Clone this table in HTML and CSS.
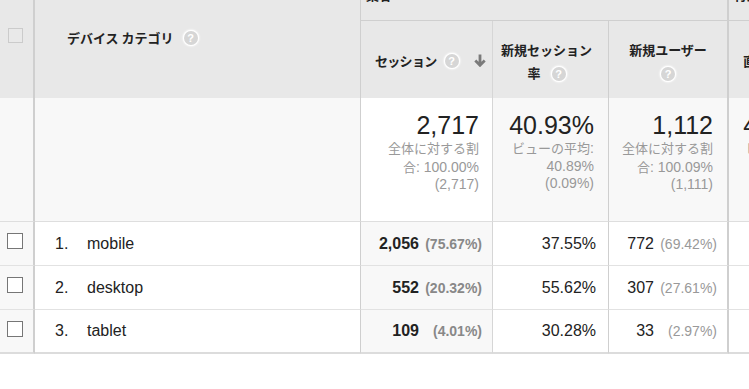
FILE: index.html
```html
<!DOCTYPE html>
<html lang="ja">
<head>
<meta charset="utf-8">
<title>デバイス カテゴリ</title>
<link rel="stylesheet" href="styles.css">
</head>
<body>
<div class="report">
  <div class="cell hd col0 hd-check"><span class="cb cb-head"></span></div>
  <div class="cell hd col1 hd-dim"><span class="hd-label">デバイス カテゴリ</span><span class="help">?</span></div>
  <div class="cell hd grp grp-acq">集客</div>
  <div class="cell hd grp grp-beh">行動</div>

  <div class="cell hd col2 metric m-sess"><span class="hd-label">セッション</span><span class="help">?</span><svg class="sort" width="12" height="13" viewBox="0 0 12 13"><path d="M6 0.5V11.2M1.3 6.6L6 11.3L10.7 6.6" fill="none" stroke="#7a7a7a" stroke-width="2.8"/></svg></div>
  <div class="cell hd col3 metric m-rate"><div class="hd-lines"><span class="hd-label">新規セッション</span><br><span class="hd-label">率</span><span class="help">?</span></div></div>
  <div class="cell hd col4 metric m-users"><div class="hd-lines"><span class="hd-label">新規ユーザー</span><br><span class="help help-solo">?</span></div></div>
  <div class="cell hd col5 metric m-bounce"><span class="hd-label">直帰率</span><span class="help">?</span></div>

  <div class="cell sum col0"></div>
  <div class="cell sum col1"></div>
  <div class="cell sum col2 sum-val sum-sorted"><div class="big">2,717</div><div class="sub"><span class="ja">全体に対する割</span><br><span class="ja">合</span>: 100.00%<br>(2,717)</div></div>
  <div class="cell sum col3 sum-val"><div class="big">40.93%</div><div class="sub"><span class="ja">ビューの平均</span>:<br>40.89%<br>(0.09%)</div></div>
  <div class="cell sum col4 sum-val"><div class="big">1,112</div><div class="sub"><span class="ja">全体に対する割</span><br><span class="ja">合</span>: 100.09%<br>(1,111)</div></div>
  <div class="cell sum col5 sum-val"><div class="big">46.52%</div><div class="sub"><span class="ja">ビューの平均</span>:<br>46.52%<br>(0.00%)</div></div>

  <div class="cell row col0 row-check"><span class="cb"></span></div>
  <div class="cell row col1 row-dim"><span class="idx">1.</span><span>mobile</span></div>
  <div class="cell row col2 num sorted"><span class="v b">2,056</span><span class="pct b">(75.67%)</span></div>
  <div class="cell row col3 num"><span class="v">37.55%</span></div>
  <div class="cell row col4 num"><span class="v">772</span><span class="pct">(69.42%)</span></div>
  <div class="cell row col5 num"><span class="v">47.81%</span></div>

  <div class="cell row col0 row-check"><span class="cb"></span></div>
  <div class="cell row col1 row-dim"><span class="idx">2.</span><span>desktop</span></div>
  <div class="cell row col2 num sorted"><span class="v b">552</span><span class="pct b">(20.32%)</span></div>
  <div class="cell row col3 num"><span class="v">55.62%</span></div>
  <div class="cell row col4 num"><span class="v">307</span><span class="pct">(27.61%)</span></div>
  <div class="cell row col5 num"><span class="v">38.22%</span></div>

  <div class="cell row last col0 row-check"><span class="cb"></span></div>
  <div class="cell row last col1 row-dim"><span class="idx">3.</span><span>tablet</span></div>
  <div class="cell row last col2 num sorted"><span class="v b">109</span><span class="pct b">(4.01%)</span></div>
  <div class="cell row last col3 num"><span class="v">30.28%</span></div>
  <div class="cell row last col4 num"><span class="v">33</span><span class="pct">(2.97%)</span></div>
  <div class="cell row last col5 num"><span class="v">44.04%</span></div>
</div>
</body>
</html>
```

FILE: styles.css
```css
html, body {
  margin: 0;
  padding: 0;
  overflow: hidden;
  background: #fff;
}
body {
  width: 749px;
  height: 389px;
  font-family: "Liberation Sans", Arial, "Noto Sans CJK JP", sans-serif;
  color: #222;
}
.report {
  display: grid;
  grid-template-columns: 35px 326px 132px 116px 120px 113px;
  grid-template-rows: 35px 77px 124px 44px 44px 44px;
  width: 842px;
  margin-top: -14px;
}
.cell {
  box-sizing: border-box;
  min-width: 0;
}
.col0 { border-right: 2px solid #cfcfcf; }
.col1 { border-right: 1px solid #cfcfcf; }
.col2 { border-right: 1px solid #d6d6d6; }
.col3 { border-right: 1px solid #cfcfcf; }
.col4 { border-right: 2px solid #cfcfcf; }

/* header */
.hd {
  background: #e8e8e8;
  font-family: "Noto Sans CJK JP", "Liberation Sans", sans-serif;
  font-weight: bold;
  font-size: 13px;
  color: #222;
}
.hd-check {
  grid-row: 1 / span 2;
  grid-column: 1;
  padding: 42px 0 0 8px;
}
.hd-dim {
  grid-row: 1 / span 2;
  grid-column: 2;
  padding: 43px 0 0 32px;
  display: flex;
  align-items: flex-start;
}
.hd-dim .hd-label { line-height: 18px; }
.hd-dim .help { margin: 2px 0 0 10px; }
.grp {
  border-bottom: 1px solid #cfcfcf;
  padding: 1px 0 0 5px;
  line-height: 16px;
}
.grp-acq {
  grid-row: 1;
  grid-column: 3 / span 3;
  border-right: 2px solid #cfcfcf;
}
.grp-beh {
  grid-row: 1;
  grid-column: 6;
}
.metric {
  display: flex;
  align-items: center;
  justify-content: center;
  text-align: center;
  padding-top: 2px;
}
.hd-lines { line-height: 23px; }
.m-sess { padding-left: 14px; justify-content: flex-start; }
.m-sess .hd-label { letter-spacing: -0.7px; }
.m-sess .help { margin-left: 8px; }
.m-sess .sort { margin-left: 15px; }
.m-rate { padding-right: 8px; }
.m-rate .help { margin-left: 11px; }
.m-bounce { justify-content: flex-start; padding-left: 14px; }
.m-bounce .help { margin-left: 9px; }

.help {
  display: inline-block;
  width: 14px;
  height: 14px;
  border-radius: 50%;
  background: #d6d6d6;
  box-shadow: 0 0 0 1px #fff, 0 0 2px 1.5px rgba(255,255,255,0.9);
  color: #fff;
  font-family: "Liberation Sans", Arial, sans-serif;
  font-size: 11px;
  font-weight: bold;
  line-height: 14px;
  text-align: center;
  vertical-align: middle;
  letter-spacing: 0;
}
.sort { display: block; }

.cb {
  display: block;
  box-sizing: border-box;
  width: 16px;
  height: 16px;
  border: 1px solid #767676;
  background: #fff;
}
.cb-head {
  width: 15px;
  height: 15px;
  border-color: #cbcbcb;
  background: #e9e9e9;
}

/* summary */
.sum {
  background: #f8f8f8;
  border-bottom: 1px solid #dedede;
}
.sum-sorted { background: #fff; }
.sum-val {
  text-align: right;
  padding: 13px 14px 0 0;
}
.sum-sorted.sum-val { padding-right: 13px; }
.big {
  font-size: 25px;
  line-height: 28px;
  color: #222;
}
.sub {
  font-size: 14px;
  line-height: 17.5px;
  color: #999;
}
.ja {
  font-family: "Noto Sans CJK JP", sans-serif;
  font-size: 13px;
}

/* data rows */
.row {
  border-bottom: 1px solid #e2e2e2;
  font-size: 16px;
  background: #fff;
}
.row.last { border-bottom: 2px solid #dcdcdc; }
.row-check {
  background: #f8f8f8;
  padding: 11px 0 0 7px;
}
.row-dim {
  display: flex;
  align-items: center;
  padding-left: 20px;
}
.idx { width: 32px; }
.num {
  display: flex;
  align-items: center;
  justify-content: flex-end;
  padding-right: 10px;
}
.col3.num { padding-right: 12px; }
.sorted { background: #f8f8f8; }
.b { font-weight: bold; }
.pct {
  width: 63px;
  text-align: right;
  font-size: 14px;
  color: #999;
}
.pct.b { color: #888; }
```
